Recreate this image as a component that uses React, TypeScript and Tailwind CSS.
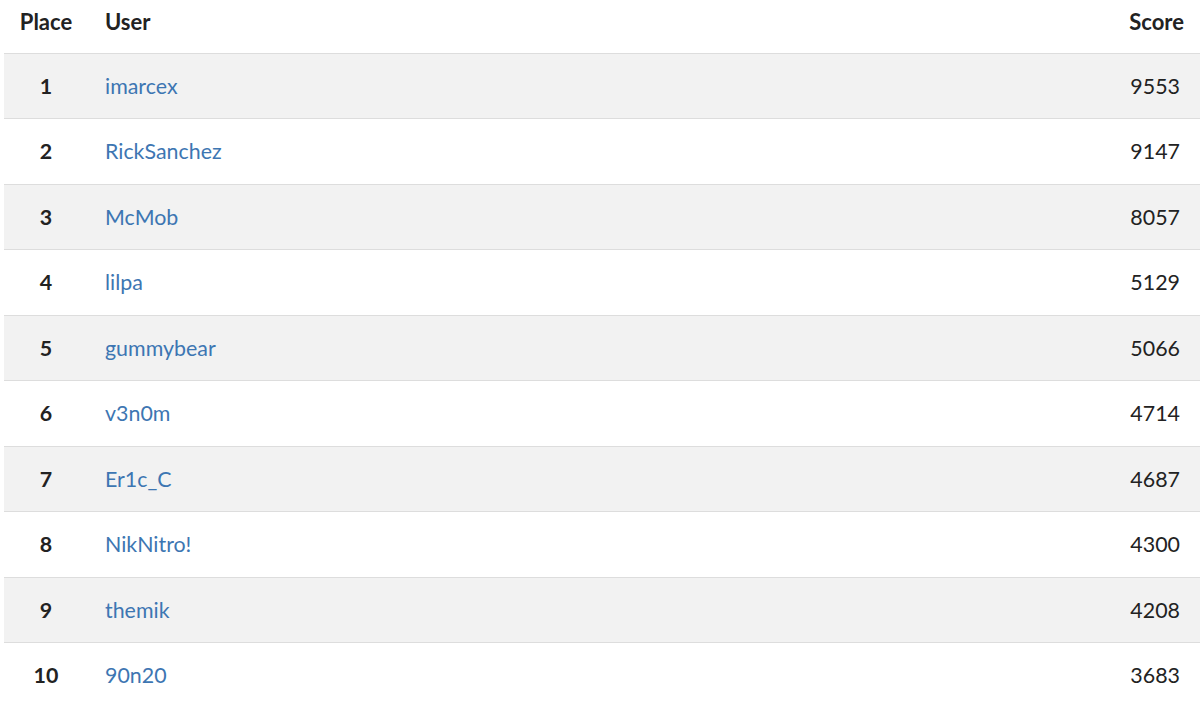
const rows = [
  { place: 1, user: "imarcex", score: 9553 },
  { place: 2, user: "RickSanchez", score: 9147 },
  { place: 3, user: "McMob", score: 8057 },
  { place: 4, user: "lilpa", score: 5129 },
  { place: 5, user: "gummybear", score: 5066 },
  { place: 6, user: "v3n0m", score: 4714 },
  { place: 7, user: "Er1c_C", score: 4687 },
  { place: 8, user: "NikNitro!", score: 4300 },
  { place: 9, user: "themik", score: 4208 },
  { place: 10, user: "90n20", score: 3683 },
];

export default function App() {
  return (
    <div className="bg-white pl-1 font-['Lato','Liberation_Sans',sans-serif] text-[21.4px] text-[#222]">
      <table className="w-full border-collapse">
        <thead>
          <tr className="h-[53px] align-top text-[22px]">
            <th className="w-[84px] pt-[5px] text-center font-bold">Place</th>
            <th className="pl-[17px] pt-[5px] text-left font-bold">User</th>
            <th className="pr-[16px] pt-[5px] text-right font-bold">Score</th>
          </tr>
        </thead>
        <tbody>
          {rows.map((r, i) => (
            <tr
              key={r.place}
              className={
                "h-[65.5px] border-t border-[#dddddd] " +
                (i % 2 === 0 ? "bg-[#f2f2f2]" : "bg-white")
              }
            >
              <td className="text-center font-bold">{r.place}</td>
              <td className="pl-[17px]">
                <a href="#" className="text-[#3d76b2]">
                  {r.user}
                </a>
              </td>
              <td className="pr-[20px] text-right">{r.score}</td>
            </tr>
          ))}
        </tbody>
      </table>
    </div>
  );
}
